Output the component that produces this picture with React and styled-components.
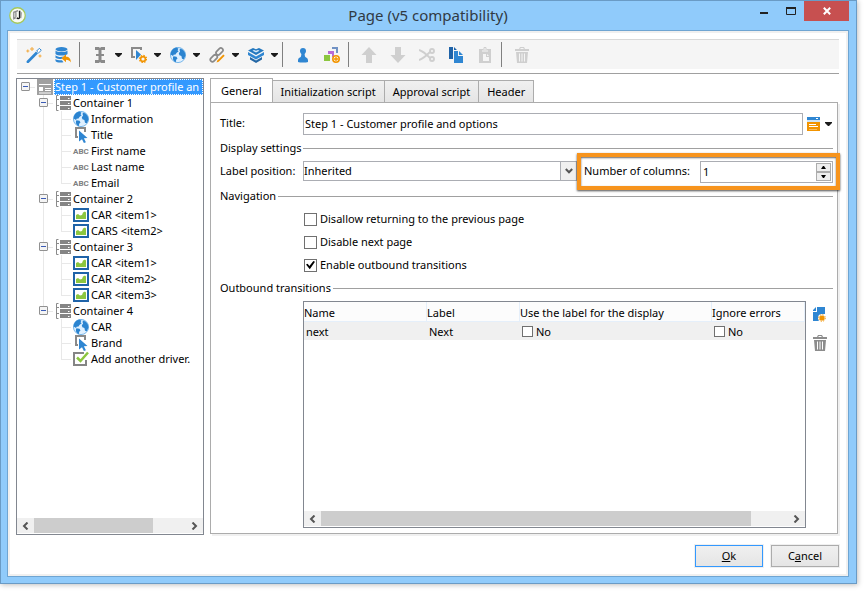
import React, { useState } from "react";
import styled, { createGlobalStyle, css } from "styled-components";

const GlobalStyle = createGlobalStyle`
	* {
		box-sizing: border-box;
	}
	html,
	body,
	#root {
		height: 100%;
		margin: 0;
	}
	body,
	button,
	input,
	select {
		font-family: "Noto Sans", "Open Sans", sans-serif;
		font-size: 11px;
		color: #000;
	}
	body {
		background: #fff;
		line-height: 16px;
	}
	button {
		padding: 0;
		border: 0;
		background: none;
	}
	svg {
		display: block;
	}
`;

/* window frame */
const Desktop = styled.div`
	display: flex;
	min-height: 100%;
	padding: 0 7px 7px 0;
`;
const Window = styled.div`
	flex: 1;
	min-width: 0;
	display: flex;
	flex-direction: column;
	padding: 0 7px 6px 6px;
	border: 1px solid #6a9bc5;
	background: #90cbfb;
	box-shadow: 1px 1px 5px rgba(0, 0, 0, 0.25);
`;
const TitleBar = styled.header`
	display: grid;
	grid-template-columns: 1fr auto 1fr;
	height: 29px;
`;
const AppLogo = styled.div`
	padding: 6px 0 0 2px;
`;
const WindowTitle = styled.h1`
	margin: 0;
	font-size: 15px;
	font-weight: 400;
	line-height: 29px;
	color: #303a44;
`;
const WindowControls = styled.div`
	display: flex;
	justify-content: flex-end;
	align-items: flex-start;
`;
const WindowButton = styled.button`
	display: grid;
	place-items: center;
	width: ${(p) => (p.$close ? "45px" : "27px")};
	height: 20px;
	background: ${(p) => (p.$close ? "#c75050" : "transparent")};
`;
const Client = styled.div`
	flex: 1;
	display: flex;
	flex-direction: column;
	padding: 6px 9px 9px 8px;
	border: 1px solid #6fa5d2;
	background: #fff;
	box-shadow: inset 0 0 0 2px #f0f0f0;
`;

/* toolbar */
const ToolbarWrap = styled.div`
	margin: 0 0 4px 1px;
	padding-top: 2px;
	padding-bottom: 4px;
	border-bottom: 1px solid #a0a0a0;
`;
const Toolbar = styled.div`
	display: flex;
	align-items: center;
	height: 30px;
	padding-left: 9px;
	border-top: 1px solid #d9d9d9;
	background: #f5f5f5;
`;
const ToolGroup = styled.div`
	display: flex;
	gap: ${(p) => (p.$menus ? "9px" : "13px")};
`;
const ToolButton = styled.button`
	display: flex;
	align-items: center;
	gap: 7px;
	height: 16px;
`;
const Separator = styled.span`
	width: 1px;
	height: 25px;
	margin: 0 12px 0 ${(p) => (p.$tight ? "4px" : "8px")};
	background: #808080;
`;

/* tree */
const Body = styled.div`
	flex: 1;
	display: flex;
	gap: 6px;
`;
const TreePanel = styled.nav`
	flex: none;
	width: 188px;
	display: flex;
	flex-direction: column;
	justify-content: space-between;
	padding-bottom: 1px;
	border: 1px solid #828790;
`;
const TreeList = styled.ul`
	margin: 0;
	padding: 0;
	list-style: none;
`;
const TreeRow = styled.div`
	display: flex;
	height: 16px;
	white-space: nowrap;
`;
const Guide = styled.span`
	flex: none;
	width: 18px;
	height: 16px;
	padding: 3px 0 0 4px;
	background-repeat: no-repeat;
	background-image: linear-gradient(#e8e8e8, #e8e8e8),
		linear-gradient(#e8e8e8, #e8e8e8);
	background-position: 8px 0, 8px 8px;
	background-size: ${(p) =>
		({
			none: "0 0, 0 0",
			pass: "1px 16px, 0 0",
			tee: "1px 16px, 10px 1px",
			end: "1px 8px, 10px 1px",
			root: "0 0, 10px 1px",
		})[p.$line]};
`;
const TreeIcon = styled.span`
	flex: none;
	width: 16px;
	height: 16px;
	margin: 0 1px 0 2px;
`;
const AbcIcon = styled(TreeIcon)`
	font-family: Roboto, sans-serif;
	font-size: 8px;
	font-weight: 700;
	line-height: 17px;
	color: #808080;
`;
const TreeLabel = styled.span`
	padding: 0 1px;
	line-height: 16px;
	${(p) =>
		p.$selected &&
		css`
			flex: 1;
			background: #3399ff;
			color: #fff;
			outline: 1px dotted #fff;
			outline-offset: -1px;
		`}
`;
const ExpanderBox = styled.button`
	display: grid;
	place-items: center;
	width: 9px;
	height: 9px;
	border: 1px solid #919191;
	border-radius: 1px;
	background: #f4f4f4;
	&::after {
		content: "";
		width: 5px;
		height: 1px;
		background: #3b5bb5;
	}
`;

/* scroll bar */
const ScrollTrack = styled.div`
	display: grid;
	grid-template-columns: 17px 1fr 17px;
	height: 15px;
	background: #f0f0f0;
`;
const ScrollArrow = styled.button`
	display: grid;
	place-items: center;
`;
const ScrollThumb = styled.div`
	background: #cdcdcd;
`;

/* tabs and form */
const Editor = styled.main`
	flex: 1;
	min-width: 0;
	display: flex;
	flex-direction: column;
	padding: 0 1px 1px 0;
`;
const TabList = styled.div`
	display: flex;
	align-items: flex-end;
	height: 25px;
	margin-bottom: -1px;
`;
const Tab = styled.button`
	height: 23px;
	padding: 0 8px;
	margin-left: -1px;
	border: 1px solid #acacac;
	background: linear-gradient(#f0f0f0, #e5e5e5);
	line-height: 20px;
	white-space: nowrap;
	&[aria-selected="true"] {
		height: 25px;
		margin-left: 0;
		padding: 0 10px;
		border-bottom-color: #fff;
		background: #fff;
		line-height: 24px;
	}
`;
const Pane = styled.section`
	flex: 1;
	display: flex;
	flex-direction: column;
	padding: 10px 4px 5px 9px;
	border: 1px solid #acacac;
	box-shadow: 2px 2px 0 #f0f0f0;
`;
const FormRow = styled.div`
	display: flex;
	align-items: center;
	height: 22px;
`;
const Caption = styled.label`
	flex: none;
	width: 83px;
	padding-bottom: 2px;
	white-space: nowrap;
`;
const TextInput = styled.input`
	flex: 1;
	min-width: 0;
	height: 22px;
	padding: 0 1px 2px;
	border: 1px solid #abadb3;
	outline: 0;
	background: #fff;
`;
const FormIcon = styled.button`
	display: flex;
	align-items: center;
	gap: 5px;
	width: 30px;
	padding-left: 4px;
`;
const Section = styled.h2`
	display: flex;
	align-items: center;
	gap: 2px;
	height: 16px;
	margin: ${(p) => p.$margin};
	font-size: 11px;
	font-weight: 400;
	white-space: nowrap;
	&::after {
		content: "";
		flex: 1;
		height: 1px;
		background: #a0a0a0;
	}
`;
const SelectBox = styled.div`
	flex: 1;
	align-self: flex-start;
	display: flex;
	height: 20px;
	border: 1px solid #abadb3;
`;
const Select = styled.select`
	flex: 1;
	min-width: 0;
	padding: 0 0 1px;
	border: 0;
	outline: 0;
	appearance: none;
	background: transparent;
`;
const SelectArrow = styled.span`
	display: grid;
	place-items: center;
	width: 16px;
	border-left: 1px solid #abadb3;
	background: #f0f0f0;
`;
const Callout = styled.div`
	position: relative;
	flex: none;
	display: flex;
	align-items: center;
	width: 256px;
	padding-left: 7px;
	&::after {
		content: "";
		position: absolute;
		inset: -8px -7px -7px 0;
		border: 4px solid #f7941d;
		box-shadow: 0 1px 2px rgba(0, 0, 0, 0.7),
			inset 0 1px 2px rgba(0, 0, 0, 0.6);
		pointer-events: none;
	}
`;
const CalloutLabel = styled.label`
	flex: 1;
	padding-bottom: 2px;
	white-space: nowrap;
`;
const NumberBox = styled.div`
	display: flex;
	width: 133px;
	height: 22px;
	padding: 1px;
	border: 1px solid #abadb3;
	background: #fff;
`;
const NumberInput = styled.input`
	flex: 1;
	min-width: 0;
	padding: 0 1px 2px;
	border: 0;
	outline: 0;
`;
const Spinner = styled.div`
	display: grid;
	grid-template-rows: 1fr 1fr;
	width: 15px;
	button {
		display: grid;
		place-items: center;
		border: 1px solid #acacac;
		background: #eee;
	}
`;
const CheckList = styled.div`
	display: grid;
	gap: 7px;
	padding-left: 84px;
`;
const CheckLabel = styled.label`
	display: flex;
	align-items: center;
	gap: 3px;
	height: 16px;
`;
const CheckBox = styled.input.attrs({ type: "checkbox" })`
	display: grid;
	place-items: center;
	width: ${(p) => (p.$small ? "11px" : "13px")};
	height: ${(p) => (p.$small ? "11px" : "13px")};
	margin: 0;
	border: 1px solid #707070;
	appearance: none;
	background: #fff;
	&:checked::before {
		content: "";
		width: 9px;
		height: 9px;
		background: #000;
		clip-path: polygon(0 45%, 18% 35%, 38% 62%, 82% 5%, 100% 15%, 42% 96%);
	}
`;
const ListArea = styled.div`
	flex: 1;
	display: flex;
	padding-left: 83px;
`;
const ListBox = styled.div`
	flex: 1;
	display: flex;
	flex-direction: column;
	justify-content: space-between;
	padding-bottom: 1px;
	border: 1px solid #828790;
`;
const Table = styled.table`
	width: 100%;
	table-layout: fixed;
	border-collapse: collapse;
	th,
	td {
		padding: 0;
		font-weight: 400;
		text-align: left;
		white-space: nowrap;
	}
	th {
		height: 20px;
		padding-top: 2px;
		background: #fcfcfc;
		box-shadow: inset -1px -1px 0 #e5effa;
	}
	td {
		height: 18px;
		padding: 1px 0 0 2px;
		background: #f0f0f0;
	}
`;
const SideTools = styled.div`
	display: flex;
	flex-direction: column;
	gap: 13px;
	width: 27px;
	padding: 5px 0 0 6px;
`;
const Footer = styled.footer`
	display: flex;
	justify-content: flex-end;
	gap: 8px;
	padding-top: 10px;
`;
const DialogButton = styled.button`
	width: 68px;
	height: 22px;
	border: 1px solid ${(p) => (p.$default ? "#3399ff" : "#acacac")};
	background: linear-gradient(#f0f0f0, #e5e5e5);
	box-shadow: 0 0 0 1px #f0f0f0;
	line-height: 18px;
`;

const Svg = ({ children, size = 16, ...rest }) => (
	<svg width={size} height={size} viewBox="0 0 16 16" {...rest}>
		{children}
	</svg>
);
const Caret = () => (
	<svg width="7" height="4" viewBox="0 0 7 4">
		<path d="M0 0h7v1L4 4H3L0 1z" fill="#1c1c1c" />
	</svg>
);
const Gear = ({ x = 11.5, y = 12 }) => (
	<g transform={`translate(${x} ${y})`} stroke="#f29400" fill="none">
		<circle r="2.4" strokeWidth="1.6" />
		<circle r="3.6" strokeWidth="1.2" strokeDasharray="1.41 1.41" />
	</g>
);

const WandIcon = () => (
	<Svg>
		<path d="M0.5 14.2 10 4.6l2 2L2.6 16H.8z" fill="#2f86d2" />
		<path d="m10.7 4 2.6-2.7 2 2-2.7 2.6z" fill="#fff" stroke="#2f86d2" />
		<path
			d="M6 0v4M4 2h4M1.8 2.5v3M.3 4h3M14 7.5v3M12.5 9h3"
			stroke="#f3a83a"
			fill="none"
		/>
	</Svg>
);
const DatabaseIcon = () => (
	<Svg>
		<ellipse cx="6.5" cy="2.3" rx="6" ry="2.2" fill="#2f86d2" />
		<path d="M.5 3.5c2 2 10 2 12 0V7c-2 2-10 2-12 0z" fill="#2f86d2" />
		<path d="M.5 8.2c2 2 6 2 8 1.300L6.500 12c-2.500 0-5-.2-6-1.200z" fill="#2f86d2" />
		<path d="M.5 12c1.500 1.300 4 1.400 6.500 1.300l1.500 2C5 16 1.500 15.500.5 14z" fill="#2f86d2" />
		<path d="m6.500 11.200 4.500-4v2.600c3 0 5 2 4.800 5.700-1-2-2.400-2.800-4.800-2.800v2.500z" fill="#f29400" />
	</Svg>
);
const TextCursorIcon = () => (
	<Svg>
		<path
			d="M3 0h4l1 1 1-1h4v3H9.500v4H12v2H9.500v4H13v3H9l-1-1-1 1H3v-3h3.500V9H4V7h2.500V3H3z"
			fill="#8a8a8a"
		/>
	</Svg>
);
const ShapeGearIcon = () => (
	<Svg>
		<path d="M4 10H1V1h9v2" fill="none" stroke="#8a8a8a" strokeWidth="2" />
		<path d="m5 3 5 4.500L5 13z" fill="#2f86d2" />
		<Gear x={12} y={12} />
	</Svg>
);
const GlobeIcon = () => (
	<Svg>
		<circle cx="8" cy="8" r="7.6" fill="#dff0ff" stroke="#5da8e6" strokeWidth=".8" />
		<path
			d="M1 5C2 2.500 4.200.8 6.500.6l2 1.200-1 1.500 1.200 1-2 1.500-1.500 2-1.300-.3L3 9 .6 7.500zM3.500 9.200l3 .6 1 1.700-1.300 1.300-.4 2.500C3.500 14 2 11.500 3.500 9.200zM10 1.500l3 1.300 2 3 .4 3-1.600 3.500-1.800-.6-.6-2.700-2-.7-.6-2 1.300-1.800L9.500 3z"
			fill="#2b84d0"
		/>
	</Svg>
);
const LinkIcon = () => (
	<Svg>
		<g fill="none" stroke="#8a8a8a" strokeWidth="1.7">
			<rect x="-4" y="-2.1" width="8" height="4.2" rx="2.1" transform="translate(4.8 11.3) rotate(-45)" />
			<rect x="-4" y="-2.1" width="8" height="4.2" rx="2.1" transform="translate(10.5 4.5) rotate(-45)" />
		</g>
		<path d="m7.500 15.500.8-2 6-6 1.400 1.300-6 6z" fill="#f29400" />
	</Svg>
);
const LayersIcon = () => (
	<Svg>
		<path d="m0 3.500 5-2.500 3 1.300L11 1l5 2.500L8 8z" fill="#2478bf" />
		<path d="m4.500 3.700 1.500-.8 2 .9 2-.9 1.500.8L8 5.500z" fill="#d8eafa" />
		<path d="m0 5 8 4.500L16 5v3l-8 4.500L0 8z" fill="#2f86d2" />
		<path d="m2 10 6 3.400 6-3.400v2.600L8 16l-6-3.400z" fill="#2467a5" />
	</Svg>
);
const PersonIcon = () => (
	<Svg>
		<path
			d="M8 1a3 3 0 0 1 3 3c0 1.500-.8 2.200-1.400 3L10 9.500c.6 1 2.700 1.200 3 3.500v2c-2 .8-8 .8-10 0v-2c.3-2.300 2.400-2.500 3-3.500L6.400 7C5.800 6.200 5 5.500 5 4a3 3 0 0 1 3-3z"
			fill="#2f86d2"
		/>
	</Svg>
);
const BoxesIcon = () => (
	<Svg>
		<path d="M8 0h6v6h-2V2H8z" fill="#7192c4" />
		<path d="M4 4h6v6H8V7H4z" fill="#b96bd6" />
		<path d="M0 8h6v6H0z" fill="#8cc63f" />
		<circle cx="12" cy="12" r="3.2" fill="#fff6e5" stroke="#f29400" strokeWidth="1.6" />
		<path d="M12 10v4M10 12h4" stroke="#f29400" strokeWidth="1.3" />
	</Svg>
);
const ArrowIcon = ({ down }) => (
	<Svg>
		<path
			d="M8 0l7.500 8H11v8H5V8H.5z"
			fill="#cfcfcf"
			transform={down ? "rotate(180 8 8)" : undefined}
		/>
	</Svg>
);
const ScissorsIcon = () => (
	<Svg>
		<g fill="none" stroke="#cfcfcf" strokeWidth="1.9">
			<circle cx="13" cy="4" r="2" />
			<circle cx="13" cy="12" r="2" />
			<path d="M0 3c4 1 8 5 11 8M0 13c4-1 8-5 11-8" />
		</g>
	</Svg>
);
const CopyIcon = () => (
	<Svg>
		<path d="M1 0h4v12H1zM6 0l3 3H6z" fill="#1f63a8" />
		<path d="M6 4h4v5h5v7H6zM11 4l4 4h-4z" fill="#2f86d2" />
	</Svg>
);
const PasteIcon = () => (
	<Svg>
		<path d="M2 2h4l1-2h2l1 2h4v14H2z" fill="#cfcfcf" />
		<path d="M5 4h6M6.500 2h3" stroke="#f5f5f5" />
		<path d="M6 7h3v3h3v4H6zM10 7l2 2h-2z" fill="#f5f5f5" />
	</Svg>
);
const TrashIcon = ({ color = "#8c8c8c", gap = "#fff" }) => (
	<Svg>
		<path d="M1 2h4l1-2h4l1 2h4v2H1zM2 5h12l-1 11H3z" fill={color} />
		<path d="M5.500 6.500v8M8 6.500v8M10.500 6.500v8M6.500 1.500h3" stroke={gap} />
	</Svg>
);
const PageIcon = () => (
	<Svg>
		<path d="M0 0h16v16H0z" fill="#a0a0a0" />
		<path d="M2 5.500h12M8 9.500h6M2 14h12M8 11.500h6" stroke="#fff" />
		<path d="M2 8h4v4H2z" fill="#fff" />
	</Svg>
);
const ContainerIcon = () => (
	<Svg>
		<path d="M3.500.5h-2v15h2M1 4.500h3M1 10.500h3" fill="none" stroke="#8a8a8a" />
		<path d="M5 1h11v4H5zM5 6h11v4H5zM5 11h11v4H5z" fill="#858585" />
		<path d="M13 3.500h1.500M13 8.500h1.500M13 13.500h1.500" stroke="#fff" />
	</Svg>
);
const PointerIcon = () => (
	<Svg>
		<path d="M5 10H3V1h9v4" fill="none" stroke="#8a8a8a" strokeWidth="2" />
		<path d="M6 3.500 14.500 11l-3.600.3 2 4-2 .7-1.900-3.800L6 14.500z" fill="#2f86d2" />
	</Svg>
);
const ImageIcon = () => (
	<Svg>
		<path d="M1 2h14v12H1z" fill="#fff" stroke="#1f63a8" strokeWidth="2" />
		<path d="M3 12V8l2-1 2 1.500L9 8l1-2.500 2-1 1 1V12z" fill="#8cc63f" />
	</Svg>
);
const CheckIcon = () => (
	<Svg>
		<path d="M13 9v5H1V2h10" fill="none" stroke="#858585" strokeWidth="2" />
		<path d="m4 6.500 3.500 3.500L15 1.500" fill="none" stroke="#8cc63f" strokeWidth="2.5" />
	</Svg>
);
const FormPageIcon = () => (
	<svg width="13" height="14" viewBox="0 0 13 14">
		<path d="M0 0h13v3H0z" fill="#2f86d2" />
		<path d="M0 3h13v2H0z" fill="#cfe4f5" />
		<path d="M0 5h13v9H0z" fill="#f29400" />
		<path d="M2 7.500h7M2 9.500h9M9 1.500h2" stroke="#fff" />
		<path d="M2 12.500h8" stroke="#f9bb5a" />
	</svg>
);
const NewIcon = () => (
	<Svg>
		<path d="M5 1h8v7H9v7H1V6h4zM1 5V4l3-3v4z" fill="#2f86d2" />
		<path d="M4.500 1v4.500H1" stroke="#fff" fill="none" />
		<circle cx="10" cy="12" r="4" fill="#fff" />
		<circle cx="10" cy="12" r="2.6" fill="#f29400" />
		<circle cx="10" cy="12" r="3.3" fill="none" stroke="#f29400" strokeDasharray="1.3 1.3" />
	</Svg>
);
const LogoIcon = () => (
	<Svg size={17}>
		<circle cx="8" cy="8" r="7.3" fill="#f8faf2" stroke="#a5c85a" strokeWidth="1.2" />
		<path d="M10 3.500V10c-.8 1.300-2 1.200-2.500 0" stroke="#1c1c1c" strokeWidth="1.4" fill="none" />
		<path d="M8.500 3.500 4.500 5v6l2-1M6.500 5v4.500M11.500 5l-.5 5.500" stroke="#8d8d8d" strokeWidth="1.2" fill="none" />
	</Svg>
);
const Chevron = ({ dir }) => (
	<svg width="7" height="8" viewBox="0 0 7 8">
		<path
			d={dir === "left" ? "M5.500.5 2 4l3.500 3.500" : "M1.500.5 5 4 1.500 7.500"}
			fill="none"
			stroke="#555"
			strokeWidth="2"
		/>
	</svg>
);

const ICONS = {
	page: PageIcon,
	container: ContainerIcon,
	globe: GlobeIcon,
	pointer: PointerIcon,
	image: ImageIcon,
	check: CheckIcon,
};

const containers = [
	{
		label: "Container 1",
		items: [
			["globe", "Information"],
			["pointer", "Title"],
			["abc", "First name"],
			["abc", "Last name"],
			["abc", "Email"],
		],
	},
	{
		label: "Container 2",
		items: [
			["image", "CAR <item1>"],
			["image", "CARS <item2>"],
		],
	},
	{
		label: "Container 3",
		items: [
			["image", "CAR <item1>"],
			["image", "CAR <item2>"],
			["image", "CAR <item3>"],
		],
	},
	{
		label: "Container 4",
		items: [
			["globe", "CAR"],
			["pointer", "Brand"],
			["check", "Add another driver."],
		],
	},
];

const tabs = ["General", "Initialization script", "Approval script", "Header"];

const NodeIcon = ({ name }) => {
	if (name === "abc") return <AbcIcon>ABC</AbcIcon>;
	const Icon = ICONS[name];
	return (
		<TreeIcon>
			<Icon />
		</TreeIcon>
	);
};

const Expander = () => <ExpanderBox type="button" aria-label="Collapse" />;

const ScrollBar = ({ share }) => (
	<ScrollTrack>
		<ScrollArrow type="button" aria-label="Scroll left">
			<Chevron dir="left" />
		</ScrollArrow>
		<ScrollThumb style={{ width: `${share}%` }} />
		<ScrollArrow type="button" aria-label="Scroll right">
			<Chevron dir="right" />
		</ScrollArrow>
	</ScrollTrack>
);

const Tool = ({ label, menu, children }) => (
	<ToolButton type="button" aria-label={label}>
		{children}
		{menu && <Caret />}
	</ToolButton>
);

const MainToolbar = () => (
	<ToolbarWrap>
		<Toolbar role="toolbar">
			<ToolGroup>
				<Tool label="Wizard"><WandIcon /></Tool>
				<Tool label="Restore"><DatabaseIcon /></Tool>
			</ToolGroup>
			<Separator />
			<ToolGroup $menus>
				<Tool label="Insert input" menu><TextCursorIcon /></Tool>
				<Tool label="Insert control" menu><ShapeGearIcon /></Tool>
				<Tool label="Insert web item" menu><GlobeIcon /></Tool>
				<Tool label="Insert link" menu><LinkIcon /></Tool>
				<Tool label="Insert container" menu><LayersIcon /></Tool>
			</ToolGroup>
			<Separator $tight />
			<ToolGroup>
				<Tool label="Personalize"><PersonIcon /></Tool>
				<Tool label="Add block"><BoxesIcon /></Tool>
			</ToolGroup>
			<Separator />
			<ToolGroup>
				<Tool label="Move up"><ArrowIcon /></Tool>
				<Tool label="Move down"><ArrowIcon down /></Tool>
				<Tool label="Cut"><ScissorsIcon /></Tool>
				<Tool label="Copy"><CopyIcon /></Tool>
				<Tool label="Paste"><PasteIcon /></Tool>
			</ToolGroup>
			<Separator />
			<Tool label="Delete"><TrashIcon color="#cfcfcf" gap="#f5f5f5" /></Tool>
		</Toolbar>
	</ToolbarWrap>
);

const PageTree = () => (
	<TreePanel>
		<TreeList>
			<li>
				<TreeRow>
					<Guide $line="root">
						<Expander />
					</Guide>
					<NodeIcon name="page" />
					<TreeLabel $selected>Step 1 - Customer profile an</TreeLabel>
				</TreeRow>
				<TreeList>
					{containers.map((box, i) => {
						const last = i === containers.length - 1;
						return (
							<li key={box.label}>
								<TreeRow>
									<Guide $line="none" />
									<Guide $line={last ? "end" : "tee"}>
										<Expander />
									</Guide>
									<NodeIcon name="container" />
									<TreeLabel>{box.label}</TreeLabel>
								</TreeRow>
								<TreeList>
									{box.items.map(([icon, label], j) => (
										<li key={label}>
											<TreeRow>
												<Guide $line="none" />
												<Guide $line={last ? "none" : "pass"} />
												<Guide $line={j === box.items.length - 1 ? "end" : "tee"} />
												<NodeIcon name={icon} />
												<TreeLabel>{label}</TreeLabel>
											</TreeRow>
										</li>
									))}
								</TreeList>
							</li>
						);
					})}
				</TreeList>
			</li>
		</TreeList>
		<ScrollBar share={78} />
	</TreePanel>
);

const App = () => {
	const [tab, setTab] = useState("General");
	const [title, setTitle] = useState("Step 1 - Customer profile and options");
	const [columns, setColumns] = useState(1);

	return (
		<Desktop>
			<GlobalStyle />
			<Window>
				<TitleBar>
					<AppLogo>
						<LogoIcon />
					</AppLogo>
					<WindowTitle>Page (v5 compatibility)</WindowTitle>
					<WindowControls>
						<WindowButton type="button" aria-label="Minimize">
							<svg width="10" height="10">
								<path d="M1 6h8v2H1z" fill="#222" />
							</svg>
						</WindowButton>
						<WindowButton type="button" aria-label="Maximize">
							<svg width="10" height="8">
								<path d="M.5 1v6.500h9V1" fill="none" stroke="#222" />
								<path d="M0 0h10v2H0z" fill="#222" />
							</svg>
						</WindowButton>
						<WindowButton type="button" aria-label="Close" $close>
							<svg width="8" height="8">
								<path d="M.8.8l6.400 6.400M7.200.8.8 7.200" stroke="#fff" strokeWidth="2" />
							</svg>
						</WindowButton>
					</WindowControls>
				</TitleBar>
				<Client>
					<MainToolbar />
					<Body>
						<PageTree />
						<Editor>
							<TabList role="tablist">
								{tabs.map((name) => (
									<Tab
										key={name}
										type="button"
										role="tab"
										aria-selected={tab === name}
										onClick={() => setTab(name)}
									>
										{name}
									</Tab>
								))}
							</TabList>
							<Pane>
								<FormRow>
									<Caption htmlFor="title">Title:</Caption>
									<TextInput
										id="title"
										value={title}
										onChange={(e) => setTitle(e.target.value)}
									/>
									<FormIcon type="button" aria-label="Personalize title">
										<FormPageIcon />
										<Caret />
									</FormIcon>
								</FormRow>
								<Section $margin="5px 0 5px">Display settings</Section>
								<FormRow>
									<Caption htmlFor="position">Label position:</Caption>
									<SelectBox>
										<Select id="position" defaultValue="Inherited">
											<option>Inherited</option>
										</Select>
										<SelectArrow>
											<svg width="8" height="6">
												<path d="M.8 1 4 4.300 7.200 1" fill="none" stroke="#555" strokeWidth="2" />
											</svg>
										</SelectArrow>
									</SelectBox>
									<Callout>
										<CalloutLabel htmlFor="columns">Number of columns:</CalloutLabel>
										<NumberBox>
											<NumberInput
												id="columns"
												inputMode="numeric"
												value={columns}
												onChange={(e) => setColumns(Number(e.target.value) || 0)}
											/>
											<Spinner>
												<button type="button" aria-label="More" onClick={() => setColumns(columns + 1)}>
													<svg width="5" height="3">
														<path d="M2 0h1l2 3H0z" />
													</svg>
												</button>
												<button type="button" aria-label="Fewer" onClick={() => setColumns(columns - 1)}>
													<svg width="5" height="3">
														<path d="M0 0h5L3 3H2z" />
													</svg>
												</button>
											</Spinner>
										</NumberBox>
									</Callout>
								</FormRow>
								<Section $margin="5px 0 7px">Navigation</Section>
								<CheckList>
									<CheckLabel>
										<CheckBox />
										Disallow returning to the previous page
									</CheckLabel>
									<CheckLabel>
										<CheckBox />
										Disable next page
									</CheckLabel>
									<CheckLabel>
										<CheckBox defaultChecked />
										Enable outbound transitions
									</CheckLabel>
								</CheckList>
								<Section $margin="7px 0 5px">Outbound transitions</Section>
								<ListArea>
									<ListBox>
										<Table>
											<colgroup>
												<col width="123" />
												<col width="93" />
												<col width="192" />
												<col />
											</colgroup>
											<thead>
												<tr>
													<th>Name</th>
													<th>Label</th>
													<th>Use the label for the display</th>
													<th>Ignore errors</th>
												</tr>
											</thead>
											<tbody>
												<tr>
													<td>next</td>
													<td>Next</td>
													<td>
														<CheckLabel>
															<CheckBox $small />
															No
														</CheckLabel>
													</td>
													<td>
														<CheckLabel>
															<CheckBox $small />
															No
														</CheckLabel>
													</td>
												</tr>
											</tbody>
										</Table>
										<ScrollBar share={92} />
									</ListBox>
									<SideTools>
										<button type="button" aria-label="Add transition">
											<NewIcon />
										</button>
										<button type="button" aria-label="Delete transition">
											<TrashIcon />
										</button>
									</SideTools>
								</ListArea>
							</Pane>
						</Editor>
					</Body>
					<Footer>
						<DialogButton type="button" $default>
							<u>O</u>k
						</DialogButton>
						<DialogButton type="button">
							C<u>a</u>ncel
						</DialogButton>
					</Footer>
				</Client>
			</Window>
		</Desktop>
	);
};

export default App;
